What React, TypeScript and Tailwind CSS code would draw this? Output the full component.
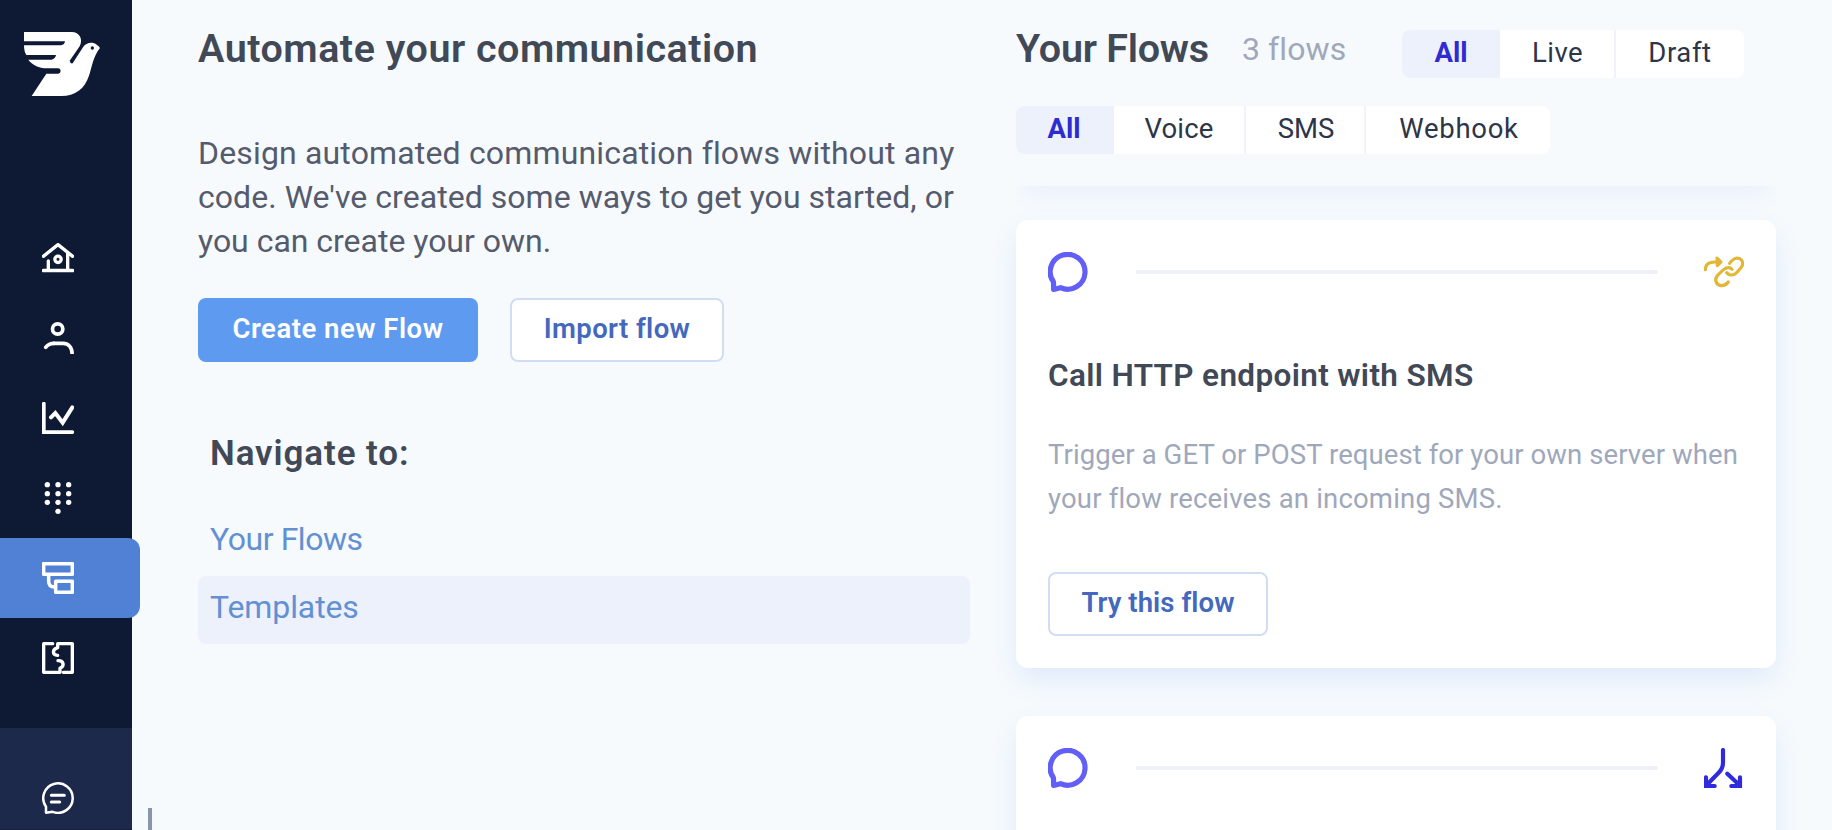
import React from "react";

const HomeIcon = () => (
  <svg className="h-8 w-8" viewBox="126 37 96 96" fill="none" stroke="#fff" strokeWidth={10} strokeLinecap="round" strokeLinejoin="round">
    <path d="M130 80 174 45 218 80M203 70V122M145 94V122M130 122.500H218" />
    <circle cx={174} cy={89} r={9.5} />
  </svg>
);

const UserIcon = () => (
  <svg className="h-8 w-8" viewBox="126 276 96 96" fill="none" stroke="#fff" strokeWidth={11}>
    <circle cx={173} cy={297} r={15.5} />
    <path d="M216.500 372C216 350 204 340 189 340H160" />
    <path d="M162 340C150 340 144 343 137 352" strokeLinecap="round" />
  </svg>
);

const ChartIcon = () => (
  <svg className="h-8 w-8" viewBox="126 516 96 96" fill="none" stroke="#fff" strokeWidth={11} strokeLinecap="round">
    <path d="M131.500 521V606.500H217" />
    <path d="M153 562 166 549 188 578 217 532" strokeWidth={12} />
  </svg>
);

const DIALS = [
  [142, 764], [174, 764], [206, 764],
  [142, 791], [174, 791], [206, 791],
  [142, 817], [174, 817], [206, 817],
  [174, 844],
];

const DialpadIcon = () => (
  <svg className="h-8 w-8" viewBox="126 756 96 96" fill="#fff">
    {DIALS.map(([x, y]) => (
      <circle key={`${x}-${y}`} cx={x} cy={y} r={8} />
    ))}
  </svg>
);

const FlowIcon = () => (
  <svg className="h-8 w-8" viewBox="126 126 96 96" fill="none" stroke="#fff" strokeWidth={10.5} strokeLinejoin="round">
    <path d="M131 131H217V163H131ZM167 184H217V217H167ZM146 165V184Q146 201 163 201H167" />
  </svg>
);

const PuzzleIcon = () => (
  <svg className="h-8 w-8" viewBox="126 366 96 96" fill="none" stroke="#fff" strokeWidth={10} strokeLinejoin="round" strokeLinecap="round">
    <path d="M158 371H131V457H180V445C195 438 191 421 174 422" />
    <path d="M190 457H217V371H173V383C156 388 156 405 173 406" />
  </svg>
);

const SupportIcon = () => (
  <svg className="h-8 w-8" viewBox="126 786 96 96" fill="none" stroke="#fff" strokeWidth={7.5} strokeLinejoin="round" strokeLinecap="round">
    <path d="M138 860A44.200 44.200 0 1 1 158 875.500L138 878Z" />
    <path d="M154 826H193M154 846H179" strokeWidth={9} />
  </svg>
);

const Logo = () => (
  <svg className="h-16 w-[76px]" viewBox="72 96 228 192" fill="#fff">
    <path d="M72 96H215C239 96 250 118 239 139L209 182Q211 192 218 190L249 142C258 127 278 124 290 134Q297 138 300 144C279 170 276 200 267 227C254 266 226 288 184 288H95L139 221H175Q182 219 182 212Q181 205 174 205H141C116 205 97 195 85 179H155Q166 176 168 165H79Q72 155 72 136H183Q194 134 195 124H72Z" />
    <circle cx={277} cy={144} r={5} fill="#0e1933" />
  </svg>
);

const BubbleIcon = () => (
  <svg className="h-10 w-10" viewBox="0 0 40 40" fill="none" stroke="#615ff5" strokeWidth={5.2} strokeLinejoin="round">
    <path d="M5.500 30A17.400 17.400 0 1 1 12.500 35.700L5.600 37.400Z" />
  </svg>
);

const LinkIcon = () => (
  <svg className="h-10 w-10" viewBox="72 36 120 120" fill="none" stroke="#e2b736" strokeWidth={9.5} strokeLinecap="round" strokeLinejoin="round">
    <path d="M76 89C76 72 88 66 104 66H120" />
    <path d="M111 54 123 66 112 77Z" fill="#e2b736" />
    <path d="M149 70Q159 55 172 54C187 55 192 70 184 82L171 97Q159 109 146 103L140 98" />
    <path d="M156 88Q150 80 139 84Q132 87 126 93L112 107C101 121 110 136 124 137Q137 137 145 126" />
  </svg>
);

const SplitIcon = () => (
  <svg className="h-10 w-10" viewBox="72 54 120 120" fill="none" stroke="#2f2bdc" strokeWidth={12.5} strokeLinecap="round">
    <path d="M129 60V98C129 112 124 120 116 128L80 165" />
    <path d="M78 142V168H104M142 131 178 165M180 142V168H154" />
  </svg>
);

const NAV = [
  { name: "home", Icon: HomeIcon },
  { name: "contacts", Icon: UserIcon },
  { name: "insights", Icon: ChartIcon },
  { name: "numbers", Icon: DialpadIcon },
  { name: "flows", Icon: FlowIcon, active: true },
  { name: "integrations", Icon: PuzzleIcon },
];

function Sidebar() {
  return (
    <aside className="flex w-[132px] shrink-0 flex-col bg-[#0e1933]">
      <div className="h-[218px] shrink-0 pt-8 pl-6">
        <Logo />
      </div>
      <nav className="flex flex-col">
        {NAV.map(({ name, Icon, active }) => (
          <a
            key={name}
            className={
              active
                ? "flex h-20 w-[140px] items-center rounded-r-xl bg-[#5081d4] pl-[42px]"
                : "flex h-20 items-center pl-[42px]"
            }
          >
            <Icon />
          </a>
        ))}
      </nav>
      <div className="mt-[30px] flex-1 border-b border-[#141d3a] bg-[#1d294b] pt-[54px] pl-[42px]">
        <SupportIcon />
      </div>
    </aside>
  );
}

type Option = { label: string; cls: string };

function Segmented({ options }: { options: Option[] }) {
  return (
    <div className="flex h-12 overflow-hidden rounded-lg bg-white text-[27.5px] leading-[44px] text-[#2d3548]">
      {options.map((o, i) => (
        <button
          key={o.label}
          className={`flex items-center justify-center pb-[3px] ${o.cls} ${
            i === 0 ? "bg-[#edf1fc] font-bold text-[#2f2bd0]" : ""
          } ${i > 1 ? "border-l-2 border-[#f0f2fc]" : ""}`}
        >
          {o.label}
        </button>
      ))}
    </div>
  );
}

function CardHead({ right }: { right: React.ReactNode }) {
  return (
    <div className="flex items-center">
      <BubbleIcon />
      <div className="mr-[46px] ml-12 h-1 flex-1 rounded-r-full bg-[#eef1fa]" />
      {right}
    </div>
  );
}

export default function App() {
  return (
    <div className="flex h-[830px] w-[1832px] overflow-hidden bg-[#f6fafd] font-[Roboto,sans-serif] whitespace-nowrap">
      <Sidebar />
      <div className="flex w-[66px] shrink-0 items-end pl-4">
        <div className="h-[22px] w-1 bg-[#8796a8]" />
      </div>

      <main className="w-[772px] shrink-0 pt-[25px]">
        <h1 className="text-[39.5px] leading-[48px] font-semibold tracking-[0.5px] text-[#414856]">Automate your communication</h1>
        <p className="mt-[58px] text-[32px] leading-[44px] tracking-[0.16px] text-[#555b6c]">
          Design automated communication flows without any
          <br />
          <span className="tracking-[0.04px]">code. We've created some ways to get you started, or</span>
          <br />
          <span className="tracking-[-0.02px]">you can create your own.</span>
        </p>
        <div className="mt-[35px] flex gap-8">
          <button className="flex h-16 w-[280px] items-center justify-center rounded-lg bg-[#5e9af0] pb-[3px] text-[27.5px] font-semibold tracking-[0.5px] text-white">
            Create new Flow
          </button>
          <button className="flex h-16 w-[214px] items-center justify-center rounded-lg border-2 border-[#d0ddf3] bg-white pb-[3px] text-[27.5px] font-semibold tracking-[0.4px] text-[#4468bd]">
            Import flow
          </button>
        </div>
        <h2 className="mt-[68px] pl-3 text-[35px] leading-[48px] font-semibold tracking-[0.9px] text-[#414856]">Navigate to:</h2>
        <nav className="mt-[30px] flex flex-col text-[32px] text-[#6390d3]">
          <a className="flex h-[68px] items-center pb-[7px] pl-3 tracking-[-0.45px]">Your Flows</a>
          <a className="flex h-[68px] items-center rounded-lg bg-[#edf1fc] pb-[7px] pl-3 tracking-[-0.1px]">Templates</a>
        </nav>
      </main>

      <section className="ml-[46px] w-[760px] shrink-0">
        <header className="relative z-10 h-[186px] bg-[#f6fafd] shadow-[0_14px_24px_-8px_rgba(80,110,240,0.08)] [clip-path:inset(0_0_-34px_0)]">
          <div className="flex pt-[25px]">
            <h2 className="w-[226px] text-[39.5px] leading-[48px] font-semibold tracking-[-0.25px] text-[#414856]">Your Flows</h2>
            <span className="w-[160px] text-[32px] leading-[48px] tracking-[0.1px] text-[#9fa8bb]">3 flows</span>
            <div className="mt-[5px]">
              <Segmented
                options={[
                  { label: "All", cls: "w-[98px]" },
                  { label: "Live", cls: "w-[114px] pl-px tracking-[0.4px]" },
                  { label: "Draft", cls: "w-[130px] tracking-[0.6px]" },
                ]}
              />
            </div>
          </div>
          <div className="mt-7 flex">
            <Segmented
              options={[
                { label: "All", cls: "w-[98px] pr-[2px]" },
                { label: "Voice", cls: "w-[130px] tracking-[0.2px]" },
                { label: "SMS", cls: "w-[120px] pl-[2px]" },
                { label: "Webhook", cls: "w-[186px] pl-[2px] tracking-[0.7px]" },
              ]}
            />
          </div>
        </header>

        <article className="mt-[34px] h-[448px] rounded-xl bg-white p-8 shadow-[0_12px_28px_-2px_rgba(70,130,220,0.14)]">
          <CardHead right={<LinkIcon />} />
          <h3 className="mt-[60px] text-[31.5px] leading-[48px] font-semibold tracking-[0.35px] text-[#414856]">Call HTTP endpoint with SMS</h3>
          <p className="mt-[33px] text-[27.5px] leading-[44px] tracking-[0.08px] text-[#9fa8bb]">
            Trigger a GET or POST request for your own server when
            <br />
            <span className="tracking-[0.18px]">your flow receives an incoming SMS.</span>
          </p>
          <button className="mt-[51px] flex h-16 w-[220px] items-center justify-center rounded-lg border-2 border-[#d0ddf3] bg-white pb-[3px] text-[27.5px] font-semibold tracking-[0.08px] text-[#4468bd]">
            Try this flow
          </button>
        </article>

        <article className="relative mt-12 h-[448px] rounded-xl bg-white p-8 shadow-[0_12px_28px_-2px_rgba(70,130,220,0.14)]">
          <CardHead right={<SplitIcon />} />
        </article>
      </section>
    </div>
  );
}
